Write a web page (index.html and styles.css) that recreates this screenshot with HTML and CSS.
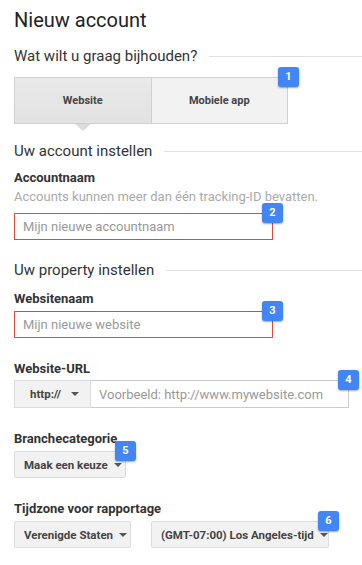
FILE: index.html
```html
<!DOCTYPE html>
<html lang="nl">

<head>
    <meta charset="UTF-8">
    <meta name="viewport" content="width=device-width, initial-scale=1.0">
    <title>Nieuw account</title>
    <link rel="stylesheet" href="styles.css">
</head>

<body>
    <div class="page">
        <h1 class="title">Nieuw account</h1>

        <h2 class="section">Wat wilt u graag bijhouden?</h2>
        <div class="tabs-wrap">
            <div class="tabs">
                <button class="tab active">Website</button>
                <button class="tab">Mobiele app</button>
                <span class="badge">1</span>
            </div>
        </div>

        <h2 class="section section-account">Uw account instellen</h2>
        <label class="label">Accountnaam</label>
        <div class="hint">Accounts kunnen meer dan één tracking-ID bevatten.</div>
        <div class="field field-hint">
            <input class="text-input error" placeholder="Mijn nieuwe accountnaam">
            <span class="badge">2</span>
        </div>

        <h2 class="section section-property">Uw property instellen</h2>
        <label class="label label-first">Websitenaam</label>
        <div class="field">
            <input class="text-input error" placeholder="Mijn nieuwe website">
            <span class="badge">3</span>
        </div>

        <label class="label label-next">Website-URL</label>
        <div class="field url-group">
            <button class="select proto">http:// <span class="arrow"></span></button>
            <input class="url-input" placeholder="Voorbeeld: http://www.mywebsite.com">
            <span class="badge">4</span>
        </div>

        <label class="label label-next">Branchecategorie</label>
        <div class="field select-wrap">
            <button class="select branch">Maak een keuze <span class="arrow"></span></button>
            <span class="badge">5</span>
        </div>

        <label class="label label-next">Tijdzone voor rapportage</label>
        <div class="tz-row">
            <button class="select country">Verenigde Staten <span class="arrow"></span></button>
            <div class="field select-wrap">
                <button class="select zone">(GMT-07:00) Los Angeles-tijd <span class="arrow"></span></button>
                <span class="badge">6</span>
            </div>
        </div>
    </div>
</body>

</html>
```

FILE: styles.css
```css
body * {
    box-sizing: border-box;
}

body {
    margin: 0;
    padding: 0;
    background: #fff;
    font-family: Roboto, "Liberation Sans", Arial, sans-serif;
    color: #333;
    overflow: hidden;
}

.page {
    padding: 8px 0 0 14px;
}

.title {
    margin: 0;
    font-size: 20px;
    line-height: 24px;
    font-weight: 400;
    color: #222;
}

.section {
    display: flex;
    align-items: center;
    margin: 14px 0 0 0;
    font-size: 15px;
    line-height: 20px;
    font-weight: 400;
    color: #333;
    white-space: nowrap;
}

.section::after {
    content: "";
    flex: 1;
    height: 1px;
    background: #e0e0e0;
    margin-left: 12px;
}

.section-account {
    margin-top: 17px;
}

.section-property {
    margin-top: 20px;
}

/* tabs */
.tabs-wrap {
    margin-top: 11px;
}

.tabs {
    position: relative;
    display: flex;
    width: 274px;
    height: 47px;
    border: 1px solid #d0d0d0;
}

.tab {
    flex: 1;
    border: none;
    margin: 0;
    padding: 0;
    background: #f2f2f2;
    font-family: inherit;
    font-size: 11px;
    font-weight: 700;
    color: #444;
}

.tab + .tab {
    border-left: 1px solid #d0d0d0;
}

.tab.active {
    position: relative;
    background: linear-gradient(#e9e9e9, #e2e2e2);
}

.tab.active::after {
    content: "";
    position: absolute;
    left: 50%;
    bottom: -8px;
    margin-left: -8px;
    border-left: 8px solid transparent;
    border-right: 8px solid transparent;
    border-top: 7px solid #dcdcdc;
}

/* fields */
.label {
    display: block;
    font-size: 13px;
    line-height: 16px;
    font-weight: 700;
    color: #333;
    margin-top: 9px;
}

.label-first {
    margin-top: 11px;
}

.label-next {
    margin-top: 23px;
}

.hint {
    margin-top: 3px;
    font-size: 13px;
    line-height: 16px;
    color: #aaa;
}

.field {
    position: relative;
    margin-top: 4px;
    width: 259px;
}

.field-hint {
    margin-top: 8px;
}

.text-input {
    display: block;
    width: 259px;
    height: 27px;
    margin: 0;
    padding: 0 8px;
    border: 1px solid #ccc;
    font-family: inherit;
    font-size: 13px;
    color: #333;
    outline: none;
}

.text-input.error {
    border-color: #dd4b39;
}

::placeholder {
    color: #999;
    opacity: 1;
}

.url-group {
    display: flex;
    width: 335px;
    height: 28px;
    margin-top: 3px;
}

.url-input {
    flex: 1;
    min-width: 0;
    height: 28px;
    margin: 0;
    padding: 0 8px;
    border: 1px solid #ccc;
    border-left: none;
    font-family: inherit;
    font-size: 13px;
    outline: none;
}

.select {
    display: flex;
    align-items: center;
    justify-content: space-between;
    height: 27px;
    margin: 0;
    padding: 0 8px 0 9px;
    border: 1px solid #dcdcdc;
    border-radius: 2px;
    background: #f2f2f2;
    font-family: inherit;
    font-size: 11.5px;
    font-weight: 700;
    color: #444;
    white-space: nowrap;
}

.arrow {
    flex: none;
    width: 0;
    height: 0;
    margin-left: 6px;
    border-left: 4px solid transparent;
    border-right: 4px solid transparent;
    border-top: 4px solid #555;
}

.proto {
    width: 77px;
    height: 28px;
    justify-content: center;
    border-radius: 0;
    padding: 0 0 0 4px;
}

.proto .arrow {
    margin-left: 10px;
}

.select-wrap {
    width: auto;
    display: inline-block;
}

.branch {
    width: 112px;
}

.tz-row {
    display: flex;
    align-items: flex-start;
    gap: 20px;
    margin-top: 4px;
}

.tz-row .field {
    margin-top: 0;
}

.country {
    width: 117px;
}

.zone {
    width: 178px;
}

/* numbered markers */
.badge {
    position: absolute;
    top: -10px;
    right: -10px;
    width: 21px;
    height: 20px;
    border-radius: 3px;
    background: #4285f4;
    box-shadow: 0 1px 2px rgba(0, 0, 0, 0.35);
    color: #fff;
    font-size: 11px;
    font-weight: 700;
    line-height: 20px;
    text-align: center;
    z-index: 1;
}

.tabs .badge {
    top: -11px;
    right: -12px;
}
```
